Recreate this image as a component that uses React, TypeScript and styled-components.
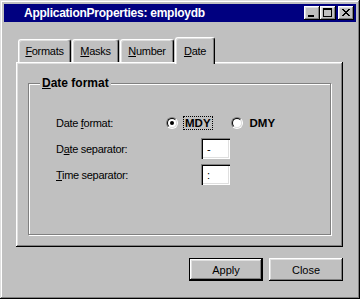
import * as React from 'react';
import styled, { createGlobalStyle } from 'styled-components';

const GlobalStyle = createGlobalStyle`
  html, body {
    margin: 0;
    padding: 0;
    background: #c0c0c0;
  }
  body {
    font-family: "Liberation Sans", Arial, sans-serif;
    font-size: 11px;
    letter-spacing: -0.3px;
    color: #000;
  }
`

const raised = `
  box-shadow:
    inset -1px -1px #000,
    inset 1px 1px #fff,
    inset -2px -2px #808080,
    inset 2px 2px #dfdfdf;
`

const Window = styled.div`
  box-sizing: border-box;
  width: 360px;
  height: 299px;
  padding: 4px;
  background: #c0c0c0;
  display: flex;
  flex-direction: column;
  box-shadow:
    inset -1px -1px #000,
    inset 1px 1px #dfdfdf,
    inset -2px -2px #808080,
    inset 2px 2px #fff;
`

const TitleBar = styled.div`
  height: 18px;
  display: flex;
  align-items: center;
  padding: 0 2px 0 20px;
  background: #000080;
  color: #fff;
  font-weight: bold;
  font-size: 12px;
  letter-spacing: -0.25px;
`

const TitleText = styled.span`
  flex: 1;
`

const CaptionButton = styled.button<{ $gap?: number }>`
  box-sizing: border-box;
  width: 16px;
  height: 14px;
  padding: 0;
  margin-left: ${p => p.$gap ?? 0}px;
  border: none;
  background: #c0c0c0;
  display: block;
  ${raised}

  svg {
    display: block;
  }
`

const Body = styled.div`
  padding: 15px 13px 0 12px;
`

const TabStrip = styled.div`
  height: 25px;
  display: flex;
  align-items: flex-end;
  padding-left: 2px;
`

const Tab = styled.div<{ $w: number; $active?: boolean }>`
  box-sizing: border-box;
  width: ${p => p.$w}px;
  height: ${p => (p.$active ? 27 : 23)}px;
  margin-right: 1px;
  margin-bottom: ${p => (p.$active ? -2 : 0)}px;
  position: relative;
  z-index: ${p => (p.$active ? 1 : 0)};
  background: #c0c0c0;
  border-top: 1px solid #fff;
  border-left: 1px solid #fff;
  border-right: 1px solid #000;
  border-radius: 3px 3px 0 0;
  box-shadow: inset -1px 0 #808080, inset 1px 1px #dfdfdf;
  display: flex;
  align-items: center;
  justify-content: center;
`

const Key = styled.span`
  text-decoration: underline;
  text-underline-offset: 1px;
`

const Panel = styled.div`
  box-sizing: border-box;
  width: 327px;
  height: 185px;
  padding: 14px 12px 12px;
  display: flex;
  flex-direction: column;
  ${raised}
  box-shadow:
    inset -1px -1px #000,
    inset 1px 1px #fff,
    inset -2px -2px #808080,
    inset 2px 2px #dfdfdf;
`

const Group = styled.fieldset`
  flex: 1;
  margin: 0;
  padding: 0;
  min-width: 0;
  border: 1px solid #808080;
  box-shadow: inset 1px 1px #fff, 1px 1px #fff;
`

const GroupTitle = styled.legend`
  margin-left: 11px;
  padding: 0 2px;
  font-weight: bold;
  font-size: 12px;
  letter-spacing: 0;
  background: #c0c0c0;
`

const Fields = styled.div`
  display: grid;
  grid-template-columns: 110px auto;
  grid-auto-rows: 21px;
  row-gap: 5px;
  align-items: center;
  padding: 22px 0 0 27px;
`

const Label = styled.span``

const Options = styled.div`
  display: flex;
  align-items: center;
`

const Option = styled.label`
  display: flex;
  align-items: center;
  gap: 5px;
  margin-right: 18px;
`

const RadioOuter = styled.span`
  box-sizing: border-box;
  width: 12px;
  height: 12px;
  border-radius: 50%;
  border: 1px solid;
  border-color: #808080 #fff #fff #808080;
`

const RadioInner = styled.span<{ $checked?: boolean }>`
  box-sizing: border-box;
  width: 10px;
  height: 10px;
  border-radius: 50%;
  border: 1px solid;
  border-color: #000 #dfdfdf #dfdfdf #000;
  background: #fff;
  display: flex;
  align-items: center;
  justify-content: center;

  &::after {
    content: '';
    width: 4px;
    height: 4px;
    border-radius: 50%;
    background: ${p => (p.$checked ? '#000' : 'transparent')};
  }
`

const OptionText = styled.span<{ $focused?: boolean }>`
  box-sizing: border-box;
  height: 14px;
  line-height: 12px;
  padding: 0 1px;
  border: 1px dotted ${p => (p.$focused ? '#000' : 'transparent')};
  font-weight: bold;
  font-size: 11.5px;
  letter-spacing: 0;
`

const TextBox = styled.input`
  box-sizing: border-box;
  width: 29px;
  height: 21px;
  margin: 0 0 0 35px;
  padding: 0 0 0 6px;
  border: none;
  outline: none;
  background: #fff;
  font: inherit;
  color: #000;
  box-shadow:
    inset 1px 1px #808080,
    inset 2px 2px #000,
    inset -1px -1px #fff,
    inset -2px -2px #dfdfdf;
`

const ButtonRow = styled.div`
  display: flex;
  justify-content: flex-end;
  gap: 6px;
  width: 327px;
  margin-top: 11px;
`

const PushButton = styled.button<{ $default?: boolean }>`
  box-sizing: border-box;
  width: 74px;
  height: 23px;
  padding: 0;
  background: #c0c0c0;
  border: ${p => (p.$default ? '1px solid #000' : 'none')};
  font: inherit;
  color: #000;
  ${raised}
`

const MinIcon = () => (
  <svg width="16" height="14" shapeRendering="crispEdges">
    <rect x="4" y="9" width="6" height="2" fill="#000" />
  </svg>
)

const MaxIcon = () => (
  <svg width="16" height="14" shapeRendering="crispEdges">
    <rect x="3" y="2" width="9" height="2" fill="#000" />
    <rect x="3" y="2" width="1" height="9" fill="#000" />
    <rect x="11" y="2" width="1" height="9" fill="#000" />
    <rect x="3" y="10" width="9" height="1" fill="#000" />
  </svg>
)

const CloseIcon = () => {
  // X drawn row by row: [left offset, right offset]
  const rows = [0, 1, 2, 3, 2, 1, 0]
  return (
    <svg width="16" height="14" shapeRendering="crispEdges">
      {rows.map((d, i) => (
        <React.Fragment key={i}>
          <rect x={4 + d} y={3 + i} width="2" height="1" fill="#000" />
          <rect x={10 - d} y={3 + i} width="2" height="1" fill="#000" />
        </React.Fragment>
      ))}
    </svg>
  )
}

const tabs = [
  { key: 'F', rest: 'ormats', w: 53 },
  { key: 'M', rest: 'asks', w: 47 },
  { key: 'N', rest: 'umber', w: 54 },
  { key: 'D', rest: 'ate', w: 40, active: true },
]

export default function App() {
  return (
    <>
      <GlobalStyle />
      <Window>
        <TitleBar>
          <TitleText>ApplicationProperties: employdb</TitleText>
          <CaptionButton><MinIcon /></CaptionButton>
          <CaptionButton><MaxIcon /></CaptionButton>
          <CaptionButton $gap={2}><CloseIcon /></CaptionButton>
        </TitleBar>
        <Body>
          <TabStrip>
            {tabs.map(t => (
              <Tab key={t.key} $w={t.w} $active={t.active}>
                <span><Key>{t.key}</Key>{t.rest}</span>
              </Tab>
            ))}
          </TabStrip>
          <Panel>
            <Group>
              <GroupTitle><Key>D</Key>ate format</GroupTitle>
              <Fields>
                <Label>Date <Key>f</Key>ormat:</Label>
                <Options>
                  <Option>
                    <RadioOuter><RadioInner $checked /></RadioOuter>
                    <OptionText $focused>MDY</OptionText>
                  </Option>
                  <Option>
                    <RadioOuter><RadioInner /></RadioOuter>
                    <OptionText>DMY</OptionText>
                  </Option>
                </Options>
                <Label>D<Key>a</Key>te separator:</Label>
                <TextBox value="-" readOnly />
                <Label><Key>T</Key>ime separator:</Label>
                <TextBox value=":" readOnly />
              </Fields>
            </Group>
          </Panel>
          <ButtonRow>
            <PushButton $default>Apply</PushButton>
            <PushButton>Close</PushButton>
          </ButtonRow>
        </Body>
      </Window>
    </>
  )
}
